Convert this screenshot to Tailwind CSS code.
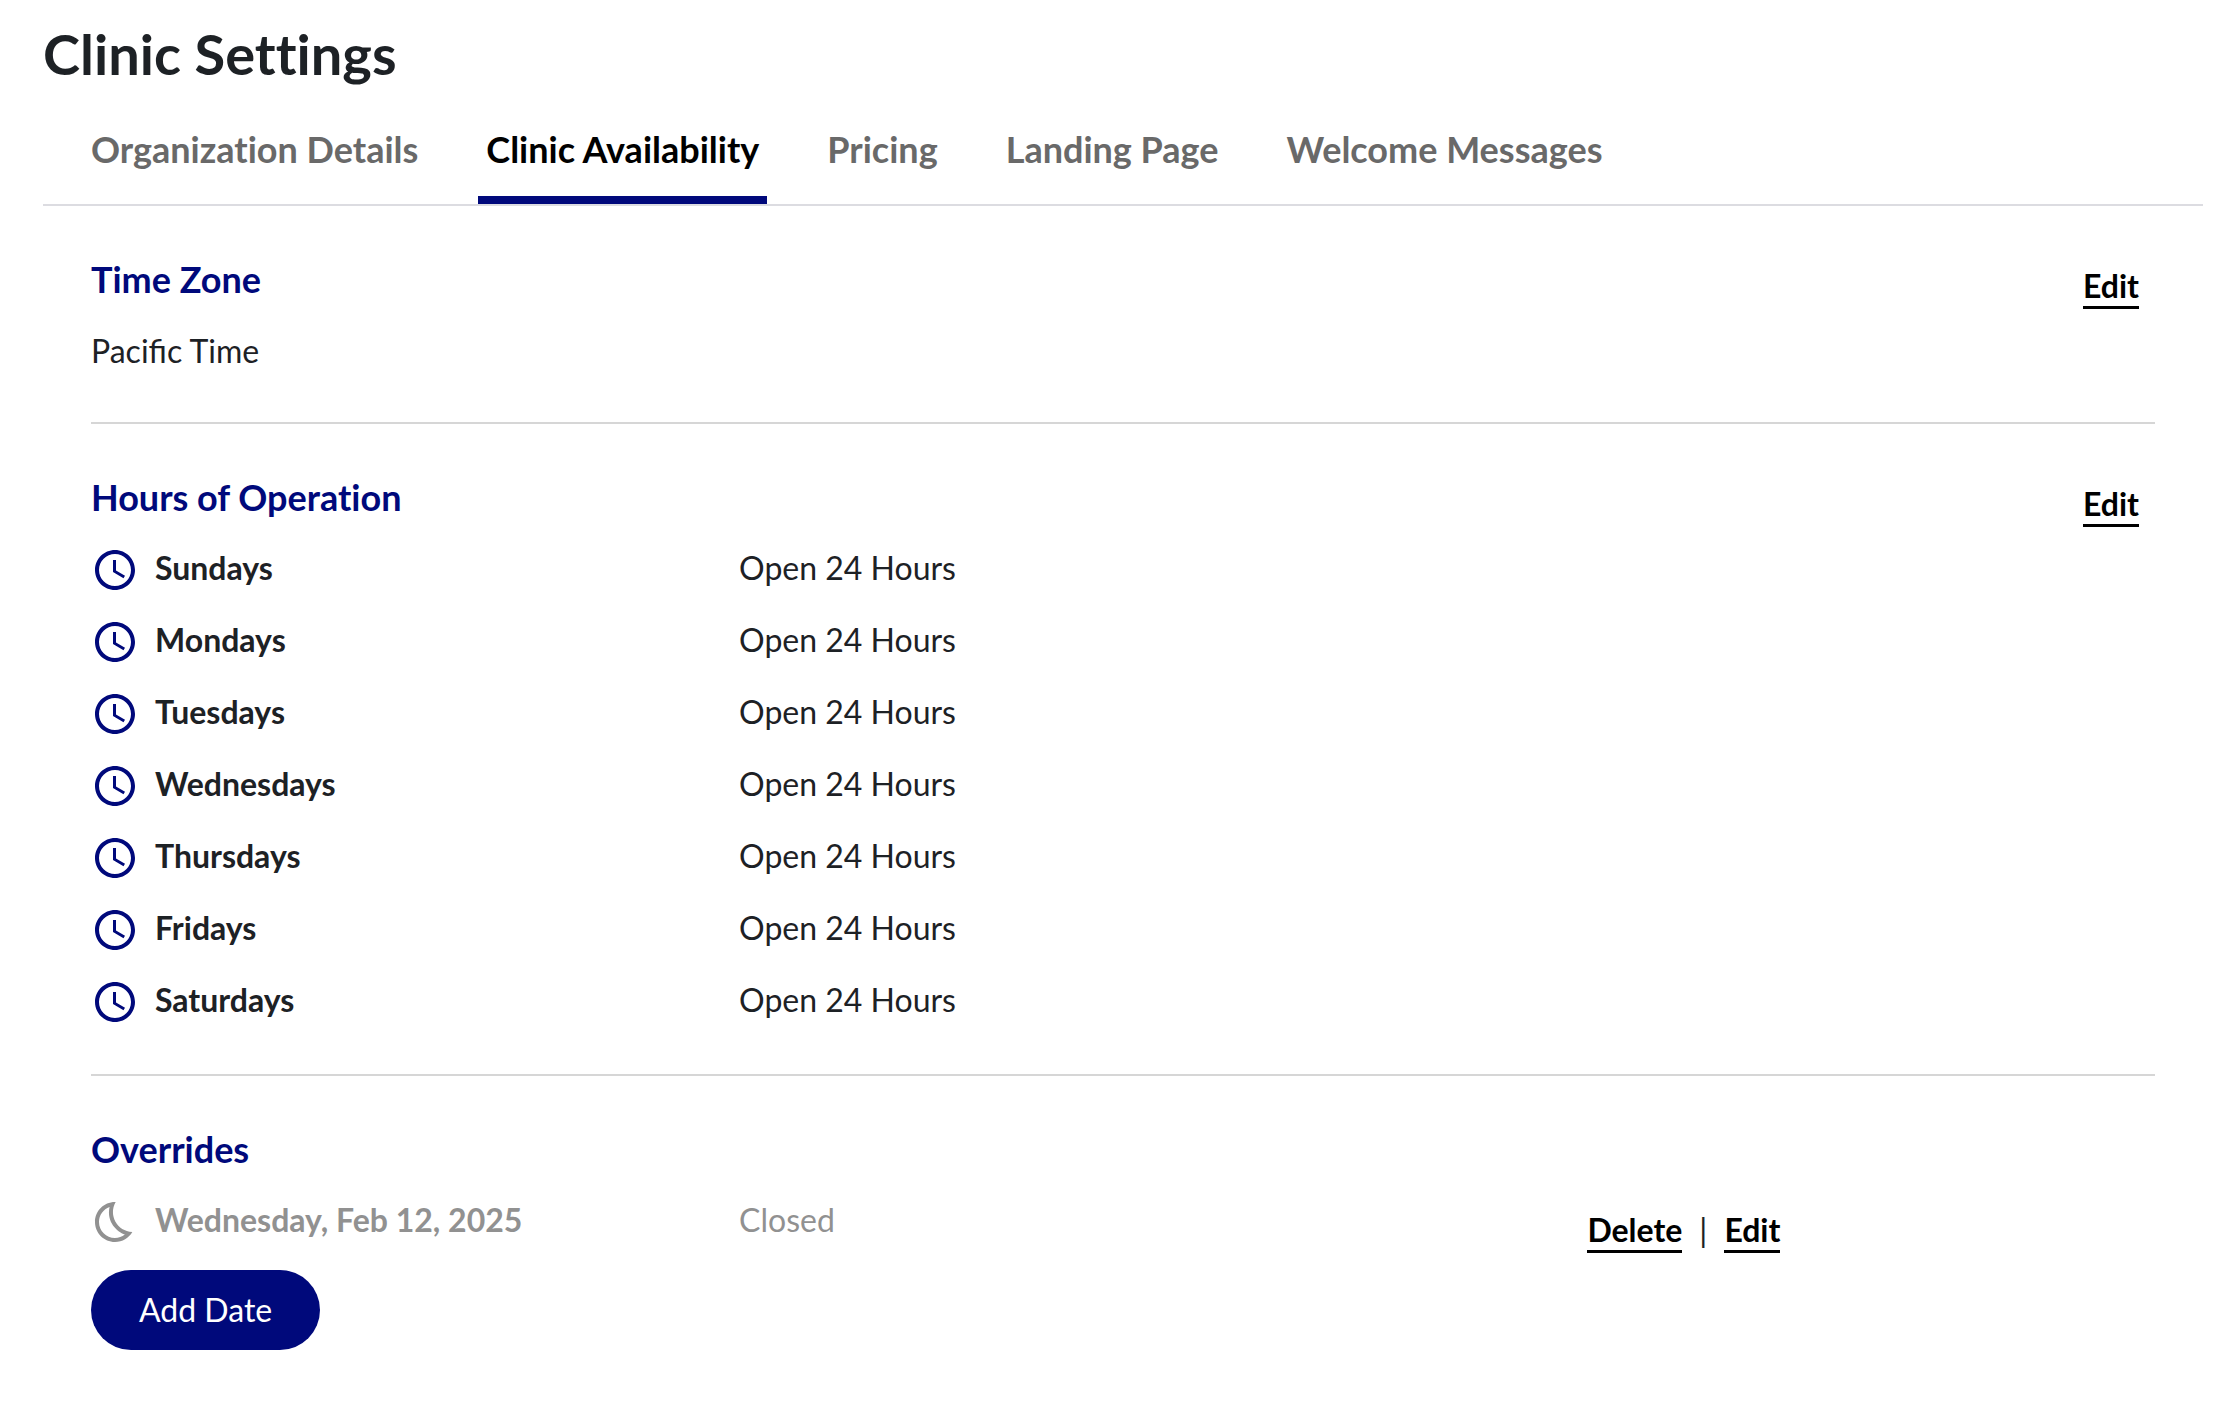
<!DOCTYPE html>
<html lang="en">
<head>
  <meta charset="UTF-8" />
  <meta name="viewport" content="width=device-width, initial-scale=1" />
  <title>Clinic Settings</title>
  <script src="https://cdn.jsdelivr.net/npm/@tailwindcss/browser@4"></script>
</head>
<body class="bg-white text-[#1d2125] font-['Lato',sans-serif] text-[32px] leading-[48px] [font-variant-ligatures:none]">

  <!-- Icons -->
  <svg class="hidden">
    <symbol id="icon-clock" viewBox="0 0 24 24">
      <path d="M11.99 2C6.47 2 2 6.48 2 12s4.47 10 9.99 10C17.52 22 22 17.52 22 12S17.52 2 11.99 2zM12 20c-4.42 0-8-3.58-8-8s3.58-8 8-8 8 3.58 8 8-3.58 8-8 8zm.5-13H11v6l5.25 3.15.75-1.23-4.5-2.67z" />
    </symbol>
    <symbol id="icon-moon" viewBox="0 0 24 24">
      <path d="M9.27 4.49c-1.63 7.54 3.75 12.41 7.66 13.8C15.54 19.38 13.81 20 12 20c-4.41 0-8-3.59-8-8 0-3.45 2.2-6.4 5.27-7.51M11.99 2.01C6.4 2.01 2 6.54 2 12c0 5.52 4.48 10 10 10 3.71 0 6.93-2.02 8.66-5.02-7.51-.25-12.09-8.43-8.32-14.97h-.35z" />
    </symbol>
  </svg>

  <main class="pt-5 pl-[43px] pr-[27px]">
    <h1 class="text-[56px] leading-[68px] font-bold">Clinic Settings</h1>

    <nav class="mt-6 pl-10 flex gap-[52px] border-b-2 border-[#dcdce1] text-[36px] font-bold text-[#696969]">
      <a href="#organization" class="px-2 pt-[13px] pb-[31px]">Organization Details</a>
      <a href="#availability" class="px-2 pt-[13px] pb-[23px] border-b-8 border-[#00097b] text-black">Clinic Availability</a>
      <a href="#pricing" class="px-2 pt-[13px] pb-[31px]">Pricing</a>
      <a href="#landing" class="px-2 pt-[13px] pb-[31px]">Landing Page</a>
      <a href="#welcome" class="px-2 pt-[13px] pb-[31px]">Welcome Messages</a>
    </nav>

    <div class="px-12">

      <!-- Time zone -->
      <section class="pt-[49px] pb-[47px] border-b-2 border-[#d6d6d6]">
        <div class="h-12 flex justify-between items-start">
          <h2 class="text-[36px] font-bold text-[#00097b]">Time Zone</h2>
          <button type="button" class="mt-[11px] mr-4 leading-10 font-bold text-black border-b-3 border-black">Edit</button>
        </div>
        <p class="mt-6 [font-variant-ligatures:normal]">Pacific Time</p>
      </section>

      <!-- Hours of operation -->
      <section class="pt-[49px] pb-[26px] border-b-2 border-[#d6d6d6]">
        <div class="h-12 flex justify-between items-start">
          <h2 class="text-[36px] font-bold text-[#00097b]">Hours of Operation</h2>
          <button type="button" class="mt-[11px] mr-4 leading-10 font-bold text-black border-b-3 border-black">Edit</button>
        </div>
        <table class="mt-[23px] w-full table-fixed text-left">
          <tbody>
            <tr class="h-[72px] align-top">
              <th scope="row" class="w-[31.4%] font-bold">
                <span class="flex gap-4"><svg class="mt-0.5 size-12 fill-[#00097b]"><use href="#icon-clock" /></svg>Sundays</span>
              </th>
              <td>Open 24 Hours</td>
            </tr>
            <tr class="h-[72px] align-top">
              <th scope="row" class="font-bold">
                <span class="flex gap-4"><svg class="mt-0.5 size-12 fill-[#00097b]"><use href="#icon-clock" /></svg>Mondays</span>
              </th>
              <td>Open 24 Hours</td>
            </tr>
            <tr class="h-[72px] align-top">
              <th scope="row" class="font-bold">
                <span class="flex gap-4"><svg class="mt-0.5 size-12 fill-[#00097b]"><use href="#icon-clock" /></svg>Tuesdays</span>
              </th>
              <td>Open 24 Hours</td>
            </tr>
            <tr class="h-[72px] align-top">
              <th scope="row" class="font-bold">
                <span class="flex gap-4"><svg class="mt-0.5 size-12 fill-[#00097b]"><use href="#icon-clock" /></svg>Wednesdays</span>
              </th>
              <td>Open 24 Hours</td>
            </tr>
            <tr class="h-[72px] align-top">
              <th scope="row" class="font-bold">
                <span class="flex gap-4"><svg class="mt-0.5 size-12 fill-[#00097b]"><use href="#icon-clock" /></svg>Thursdays</span>
              </th>
              <td>Open 24 Hours</td>
            </tr>
            <tr class="h-[72px] align-top">
              <th scope="row" class="font-bold">
                <span class="flex gap-4"><svg class="mt-0.5 size-12 fill-[#00097b]"><use href="#icon-clock" /></svg>Fridays</span>
              </th>
              <td>Open 24 Hours</td>
            </tr>
            <tr class="h-[72px] align-top">
              <th scope="row" class="font-bold">
                <span class="flex gap-4"><svg class="mt-0.5 size-12 fill-[#00097b]"><use href="#icon-clock" /></svg>Saturdays</span>
              </th>
              <td>Open 24 Hours</td>
            </tr>
          </tbody>
        </table>
      </section>

      <!-- Overrides -->
      <section class="pt-[49px]">
        <h2 class="text-[36px] font-bold text-[#00097b]">Overrides</h2>
        <table class="mt-[23px] w-full table-fixed text-left">
          <tbody>
            <tr class="h-[72px] align-top text-[#919191]">
              <th scope="row" class="w-[31.4%] font-bold">
                <span class="flex gap-4"><svg class="mt-0.5 size-12 fill-[#919191]"><use href="#icon-moon" /></svg>Wednesday, Feb 12, 2025</span>
              </th>
              <td class="w-[41.1%]">Closed</td>
              <td>
                <div class="pt-[14px] flex gap-[17px] leading-10 text-[#1d2125]">
                  <button type="button" class="font-bold text-black border-b-3 border-black">Delete</button>
                  <span>|</span>
                  <button type="button" class="font-bold text-black border-b-3 border-black">Edit</button>
                </div>
              </td>
            </tr>
          </tbody>
        </table>
        <button type="button" class="mt-0.5 px-12 py-4 rounded-full bg-[#00097b] text-white">Add Date</button>
      </section>

    </div>
  </main>

</body>
</html>
